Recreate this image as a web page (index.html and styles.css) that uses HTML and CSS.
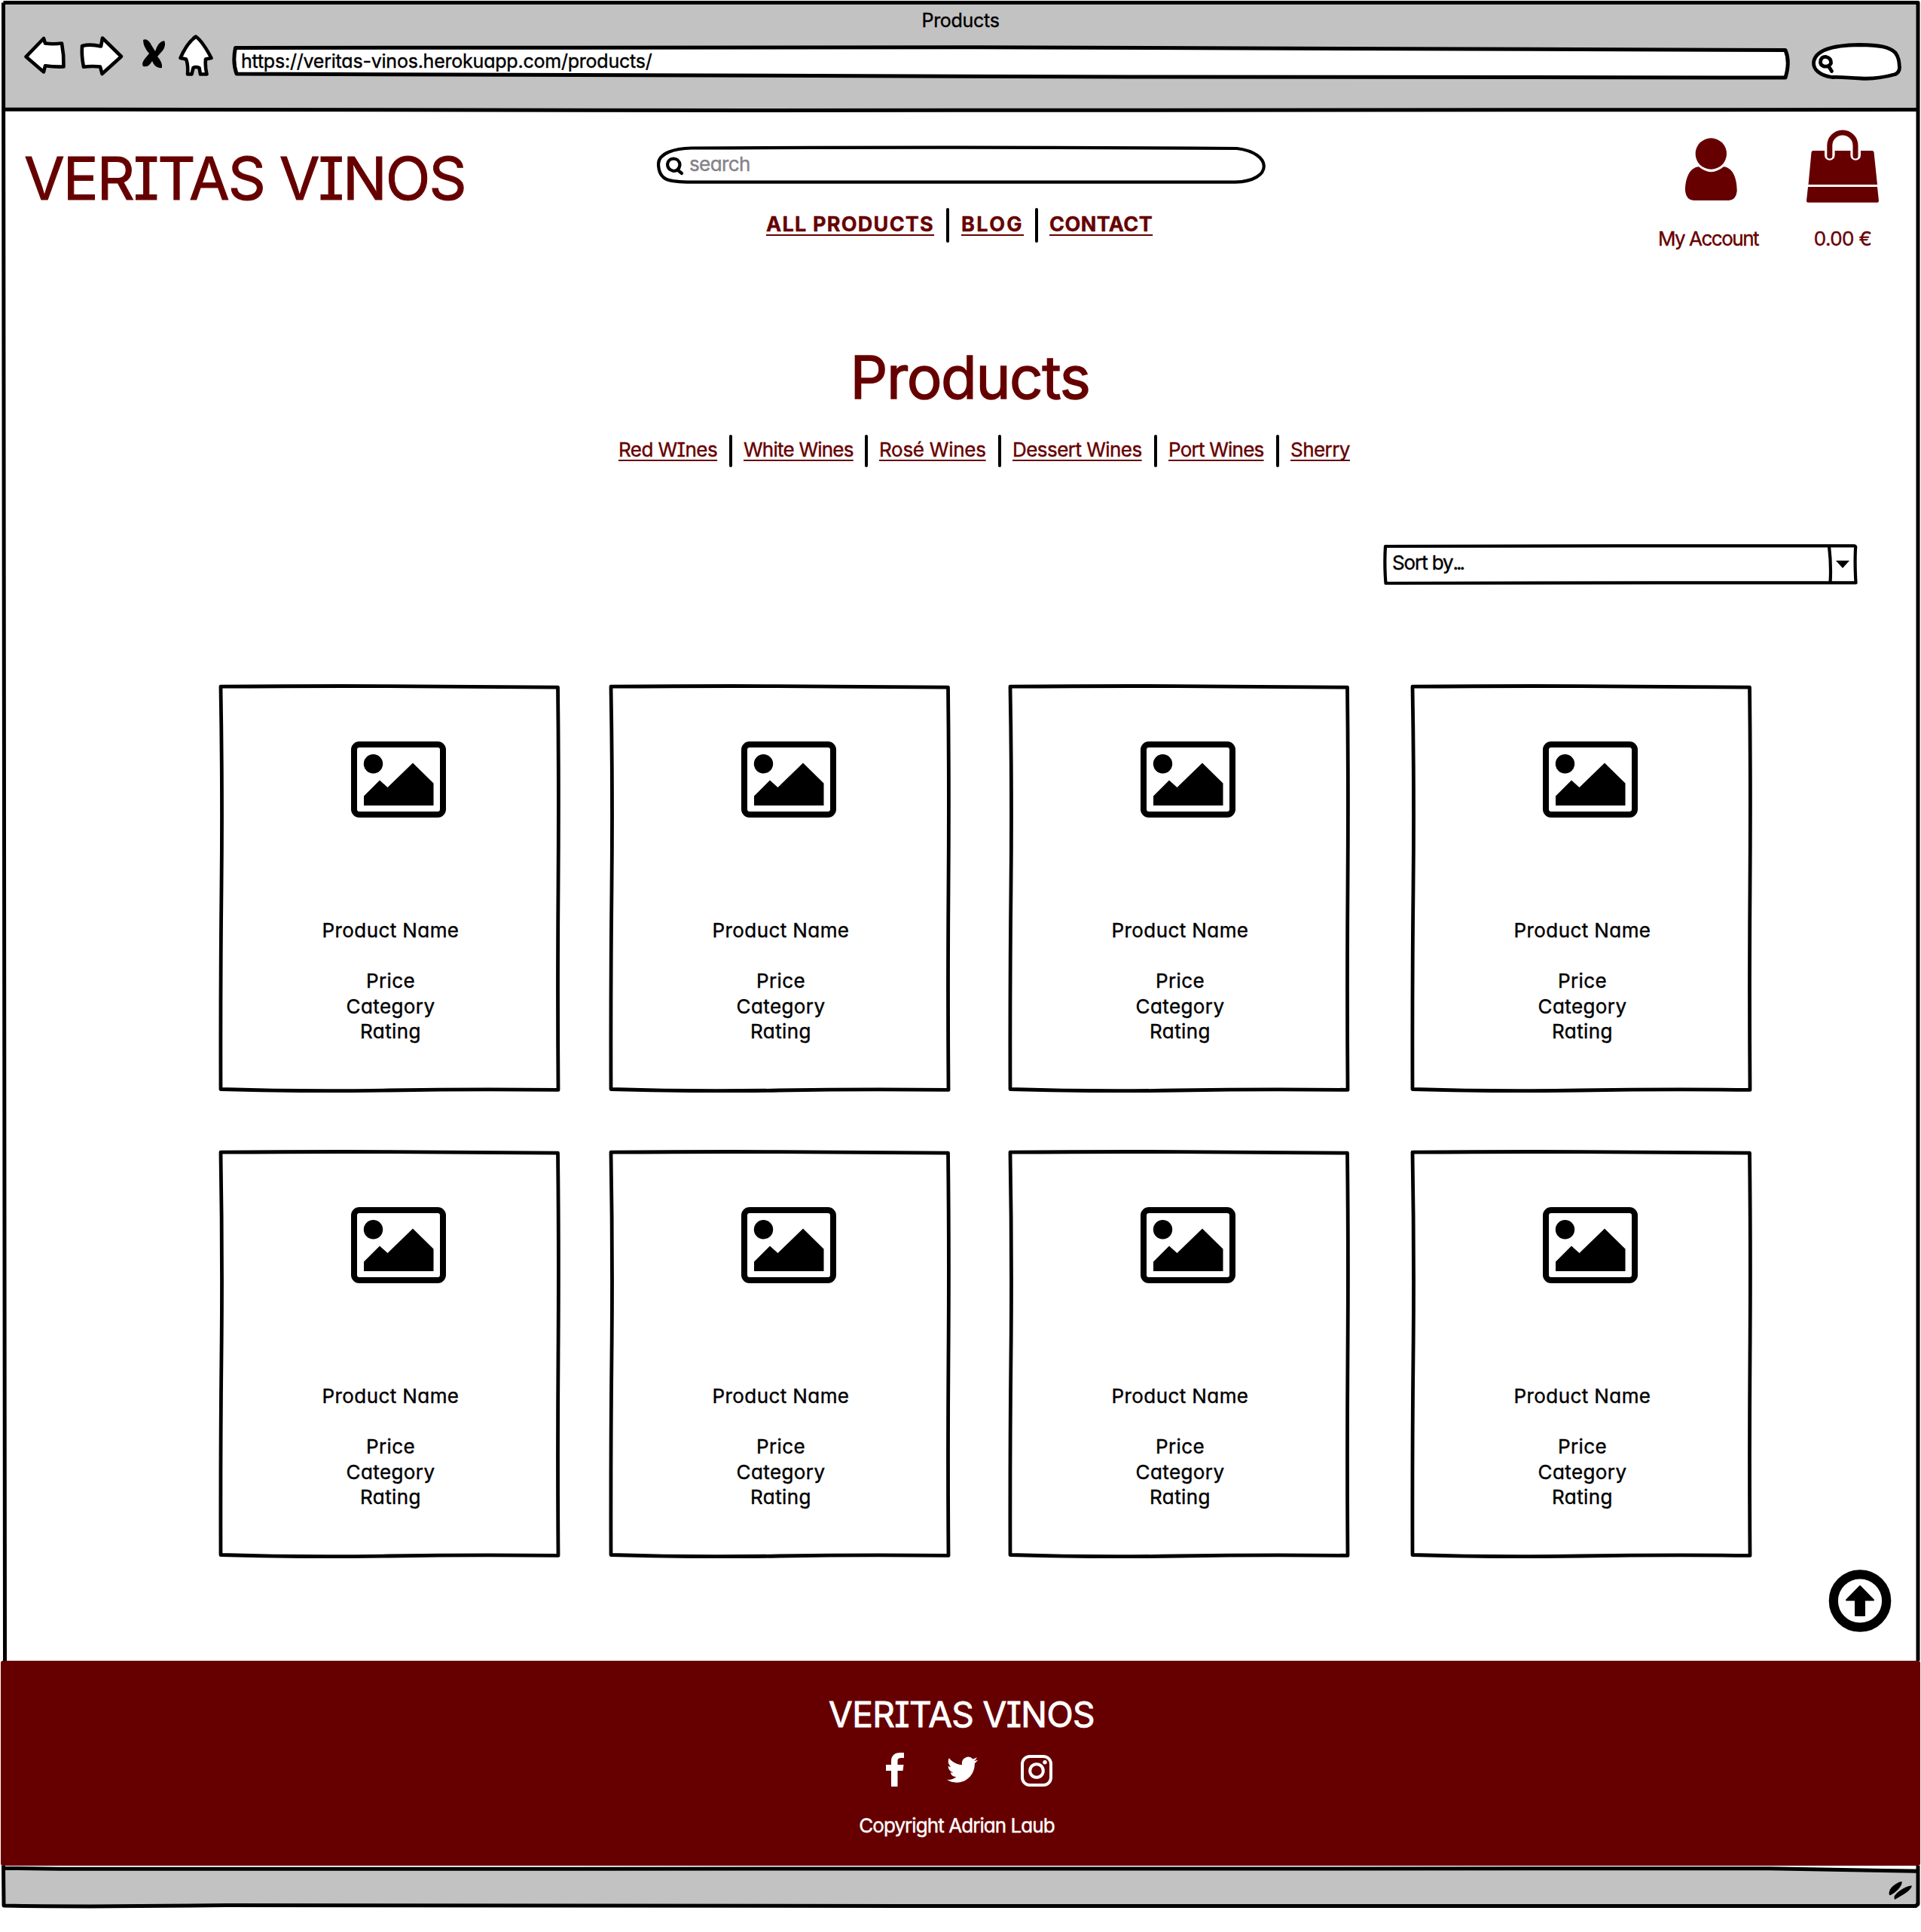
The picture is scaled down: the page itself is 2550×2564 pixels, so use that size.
FILE: index.html
```html
<!DOCTYPE html>
<html lang="en">
<head>
<meta charset="utf-8">
<title>Products</title>
<link rel="stylesheet" href="styles.css">
</head>
<body>
<svg class="sprite" aria-hidden="true">
  <symbol id="card-frame" viewBox="0 0 454 542" preserveAspectRatio="none">
    <path d="M3 3.200Q120 2.200 225 2.600T450.500 4.200Q452 130 451 270T451 538.400Q340 537 226 539T3 537.500Q2.600 400 4 270T3 3.200Z" fill="#fff" stroke="#000" stroke-width="4.800" stroke-linejoin="round"/>
  </symbol>
  <symbol id="picture" viewBox="0 0 126 101">
    <rect x="4" y="4" width="118" height="93" rx="7" fill="#fff" stroke="#000" stroke-width="8"/>
    <circle cx="29.500" cy="29.700" r="12.700"/>
    <path d="M17 72.500L38 51.500 48.500 61 82 28.500 109.500 55.500V85H17Z"/>
  </symbol>
</svg>

<div class="window">
  <header class="chrome">
    <div class="chrome-title">Products</div>
    <div class="toolbar">
      <svg class="nav-buttons" viewBox="28 40 262 66">
        <g fill="#fff" stroke="#000" stroke-width="4.600" stroke-linejoin="round">
          <path d="M34.500 75.300L58 51 60 57.500Q70 59 82 57.500 85 73 84.500 88.500 72 89 60 87.300L58 95.500Z"/>
          <path d="M109 61Q120 58 134 61.500L136 50.500 161 75 135.500 98 133 88.500Q121 87.500 111 88.800 108 74 109 61Z"/>
          <path d="M260 48.500Q269 55 280.500 77L273 78.500Q272 88 274.500 98.500H266L264.500 90Q260 88 256.500 90L254.500 98.500H249Q250 86 247 78.500L239.500 77Q248 57 260 48.500Z"/>
        </g>
        <path d="M190 53Q196 50 201 60L206 68Q210 55 218 54 221 60 216 67L209 75Q216 83 215 90 208 91 204 85L202 81Q197 90 190 88 187 84 193 77L198 71Q190 62 190 53Z"/>
      </svg>
      <div class="url-field">
        <svg class="outline" viewBox="308 58 2070 50"><path d="M312.500 63.500L1300 62.800Q1800 63.500 2370 66.500 2376.500 82 2370 103L1500 102Q900 99 314 98 308.500 82 312.500 63.500Z"/></svg>
        <span class="url-text">https://veritas-vinos.herokuapp.com/products/</span>
      </div>
      <svg class="mini-search" viewBox="2402 54 126 56">
        <g fill="#fff" stroke="#000" stroke-width="4.800" stroke-linecap="round" stroke-linejoin="round">
          <path d="M2407.500 83C2409 68 2428 60 2468 59.500 2495 60 2508 62 2516 70 2521 77 2521 83 2521.500 90Q2521 96 2516 98.500C2500 103 2485 105 2470 104 2450 103 2445 102 2432 102.500 2415 100 2407 92 2407.500 83Z"/>
          <path d="M2416.500 82Q2417 75 2424 75.500 2431 77 2430.500 84 2428 89 2421 88 2416 86 2416.500 82ZM2428 89L2431.500 94.500"/>
        </g>
      </svg>
    </div>
  </header>

  <div class="site-header">
    <div class="brand">VERITAS VINOS</div>
    <div class="header-center">
      <div class="search">
        <svg class="outline thin" viewBox="870 192 812 54">
          <path d="M918 196.500Q1300 194.500 1642 197C1690 203 1690 240 1640 241.700L918 241.700C890 241.500 874 241 874 217 875 203 895 197 918 196.500Z"/>
          <path d="M894 210.500Q902 211 902.500 219 901 227 894 227 886 225 886 218 887 211 894 210.500ZM900 226L905 230"/>
        </svg>
        <span class="search-text">search</span>
      </div>
      <nav class="main-nav">
        <a class="all">ALL PRODUCTS</a><i></i><a class="blog">BLOG</a><i></i><a class="contact">CONTACT</a>
      </nav>
    </div>
    <div class="shortcut account">
      <svg viewBox="2221 170 100 100"><circle cx="2271.300" cy="204" r="20.700"/><path d="M2255 221.300Q2271.300 235 2288 221.300C2299 222 2305.700 235 2305.700 253Q2305 265 2295 266H2248Q2238 265 2237 253C2237 235 2244 222 2255 221.300Z"/></svg>
      <span>My Account</span>
    </div>
    <div class="shortcut bag">
      <svg viewBox="2396 170 100 100"><path d="M2407 200H2422V206A6.800 6.800 0 0 0 2435.600 206V200H2456.400V206A6.800 6.800 0 0 0 2470 206V200H2485Q2487 200 2487.500 202L2492 245H2400.500L2404.500 202Q2405 200 2407 200ZM2400 248H2492L2494 266.500Q2494 268.700 2492 268.700H2400Q2398 268.700 2398 266.500Z"/><path class="handle" d="M2428.800 207V193A17.100 17.100 0 0 1 2463 193V207"/></svg>
      <span>0.00 €</span>
    </div>
  </div>

  <main>
    <h1>Products</h1>
    <nav class="categories">
      <a>Red WInes</a><i></i><a class="tight">White Wines</a><i></i><a class="loose">Rosé Wines</a><i></i><a>Dessert Wines</a><i></i><a class="tight">Port Wines</a><i></i><a>Sherry</a>
    </nav>
    <div class="sort">
      <svg class="outline thin" viewBox="1836 722 630 54"><path d="M1839 725L2150 724.300 2461 724.300Q2464 724.500 2463 728 2462 750 2463.500 773.300L2200 773.300 1839.500 774Q1837.500 750 1839 725ZM2428 725Q2431 750 2429.500 773"/><path class="caret" d="M2437 744H2455L2446 754Z"/></svg>
      <span class="sort-text">Sort by<span class="dots">...</span></span>
    </div>
    <div class="products">
      <article class="card"><svg class="frame"><use href="#card-frame"/></svg><svg class="picture"><use href="#picture"/></svg><p class="name">Product Name</p><p>Price</p><p>Category</p><p>Rating</p></article>
      <article class="card"><svg class="frame"><use href="#card-frame"/></svg><svg class="picture"><use href="#picture"/></svg><p class="name">Product Name</p><p>Price</p><p>Category</p><p>Rating</p></article>
      <article class="card"><svg class="frame"><use href="#card-frame"/></svg><svg class="picture"><use href="#picture"/></svg><p class="name">Product Name</p><p>Price</p><p>Category</p><p>Rating</p></article>
      <article class="card"><svg class="frame"><use href="#card-frame"/></svg><svg class="picture"><use href="#picture"/></svg><p class="name">Product Name</p><p>Price</p><p>Category</p><p>Rating</p></article>
      <article class="card"><svg class="frame"><use href="#card-frame"/></svg><svg class="picture"><use href="#picture"/></svg><p class="name">Product Name</p><p>Price</p><p>Category</p><p>Rating</p></article>
      <article class="card"><svg class="frame"><use href="#card-frame"/></svg><svg class="picture"><use href="#picture"/></svg><p class="name">Product Name</p><p>Price</p><p>Category</p><p>Rating</p></article>
      <article class="card"><svg class="frame"><use href="#card-frame"/></svg><svg class="picture"><use href="#picture"/></svg><p class="name">Product Name</p><p>Price</p><p>Category</p><p>Rating</p></article>
      <article class="card"><svg class="frame"><use href="#card-frame"/></svg><svg class="picture"><use href="#picture"/></svg><p class="name">Product Name</p><p>Price</p><p>Category</p><p>Rating</p></article>
    </div>
    <svg class="to-top" viewBox="2427 2083 84 83"><circle cx="2469" cy="2124.500" r="35.200" fill="none" stroke="#000" stroke-width="12.200"/><path d="M2469 2105L2487 2123.500H2475V2144H2463V2123.500H2451Z" stroke="#000" stroke-width="2" stroke-linejoin="round"/></svg>
  </main>

  <footer class="site-footer">
    <div class="footer-brand">VERITAS VINOS</div>
    <div class="social">
      <svg class="facebook" viewBox="1176 2326 24 45"><path d="M1183 2371V2350H1176V2342H1183V2337C1183 2329 1189 2326 1195 2326H1200V2333H1196C1193 2333 1191.500 2334 1191.500 2337V2342H1199.500L1198.500 2350H1191.500V2371Z"/></svg>
      <svg class="twitter" viewBox="0 3 24 19.500" preserveAspectRatio="none"><path d="M23.953 4.570a10 10 0 0 1-2.825.775 4.958 4.958 0 0 0 2.163-2.723c-.951.555-2.005.959-3.127 1.184a4.920 4.920 0 0 0-8.384 4.482C7.690 8.095 4.067 6.130 1.640 3.162a4.822 4.822 0 0 0-.666 2.475c0 1.710.870 3.213 2.188 4.096a4.904 4.904 0 0 1-2.228-.616v.060a4.923 4.923 0 0 0 3.946 4.827 4.996 4.996 0 0 1-2.212.085 4.936 4.936 0 0 0 4.604 3.417 9.867 9.867 0 0 1-6.102 2.105c-.390 0-.779-.023-1.170-.067a13.995 13.995 0 0 0 7.557 2.209c9.053 0 13.998-7.496 13.998-13.985 0-.210 0-.420-.015-.630A9.935 9.935 0 0 0 24 4.590z"/></svg>
      <svg class="instagram" viewBox="0 0 42 42"><rect x="2" y="2" width="38" height="38" rx="10" fill="none" stroke="#fff" stroke-width="4"/><circle cx="21" cy="21" r="8.800" fill="none" stroke="#fff" stroke-width="4"/><circle cx="32" cy="9.800" r="2.700"/></svg>
    </div>
    <div class="copyright">Copyright Adrian Laub</div>
  </footer>
  <div class="status-bar"></div>
  <svg class="window-frame" viewBox="0 0 2550 2540">
    <path d="M4.500 3.500H2546V2204M4.500 3.500Q3 1200 6.500 2204M4 145Q500 147 1000 146.500T2546 145.500"/>
    <path d="M4.500 2476L5 2529Q120 2531 300 2528.500L1200 2529.500 2543 2529.500L2546 2527V2476M5 2479.300L80 2480.300 1400 2480 2350 2479.800 2546 2483.300"/>
    <path class="grip" d="M2508 2515Q2506 2508 2514 2502T2525 2497.500Q2524 2504 2517 2510T2508 2515ZM2515 2521Q2512 2516 2522 2509T2538 2502.500Q2537 2508 2527 2514T2515 2521Z"/>
  </svg>
</div>
</body>
</html>
```

FILE: styles.css
```css
* { box-sizing: border-box; }

body {
  margin: 0;
  background: #fff;
  color: #000;
  font-family: Inter, "Liberation Sans", sans-serif;
  font-feature-settings: "cv11", "cv08";
  font-size: 26px;
  -webkit-text-stroke: 0.4px currentColor;
}

svg { display: block; overflow: visible; }
p, h1 { margin: 0; }
span, a { white-space: nowrap; }

.sprite { position: absolute; width: 0; height: 0; }

.window {
  position: relative;
  display: flex;
  flex-direction: column;
  width: 2550px;
  height: 2540px;
}

.window-frame {
  position: absolute;
  inset: 0;
  width: 2550px;
  height: 2540px;
  fill: none;
  stroke: #000;
  stroke-width: 5;
  stroke-linejoin: round;
  pointer-events: none;
}
.window-frame .grip { fill: #000; stroke-width: 0; }

.outline {
  position: absolute;
  inset: 0;
  fill: #fff;
  stroke: #000;
  stroke-width: 5;
  stroke-linejoin: round;
  stroke-linecap: round;
}
.outline.thin { stroke-width: 4.2; }
.outline .caret { fill: #000; stroke: none; }

/* Browser chrome */
.chrome {
  height: 143px;
  margin: 3px 4px 0;
  background: #c2c2c2;
}
.chrome-title { height: 47px; line-height: 49px; text-align: center; font-size: 25px; letter-spacing: -0.3px; }
.toolbar { display: flex; align-items: flex-start; padding-left: 24px; }
.nav-buttons { width: 262px; height: 66px; margin-top: -10px; }
.url-field {
  position: relative;
  width: 2070px;
  height: 50px;
  margin: 8px 0 0 18px;
  padding-left: 12px;
  font-size: 25px;
  line-height: 47px;
  letter-spacing: -0.22px;
}
.url-text, .search-text, .sort-text { position: relative; }
.mini-search { width: 126px; height: 56px; margin: 4px 0 0 24px; }

/* Site header */
.site-header {
  display: flex;
  align-items: flex-start;
  height: 254px;
  padding-left: 32px;
  color: #660000;
}
.brand {
  width: 838px;
  margin-top: 51px;
  font-size: 78px;
  font-weight: 400;
  line-height: 80px;
  letter-spacing: -2px;
  -webkit-text-stroke-width: 1px;
}
.header-center { width: 812px; margin: 46px 509px 0 0; }
.search { position: relative; height: 54px; padding-left: 45px; line-height: 52px; letter-spacing: -0.6px; color: #85828a; }
.main-nav {
  display: grid;
  grid-template-columns: 223px 36px 83px 34px 138px;
  height: 46px;
  margin: 30px 0 0 147px;
  font-size: 27px;
  font-weight: 700;
  line-height: 44px;
}
.main-nav a, .categories a { text-decoration: underline 2px; text-underline-offset: 4px; text-decoration-skip-ink: none; }
.main-nav i, .categories i { width: 4px; justify-self: center; background: #000; border-radius: 2px; }
.main-nav .all { letter-spacing: 1.25px; }
.main-nav .blog { letter-spacing: 2.4px; }
.main-nav .contact { letter-spacing: 0.45px; }
.shortcut { width: 160px; margin: 24px 15px 0 0; text-align: center; line-height: 40px; }
.shortcut svg { width: 100px; height: 100px; margin: 0 auto 27px; fill: #660000; }
.shortcut .handle { fill: none; stroke: #660000; stroke-width: 7; stroke-linecap: round; }
.account span { margin-right: 7px; letter-spacing: -1.5px; }
.bag span { letter-spacing: -0.6px; }

/* Catalogue */
main { display: flex; flex-direction: column; }
h1 {
  margin: 50px 0 0 25px;
  font-size: 78px;
  font-weight: 400;
  line-height: 102px;
  height: 100px;
  letter-spacing: -1.4px;
  text-align: center;
  color: #660000;
  -webkit-text-stroke-width: 1.4px;
}
.categories {
  display: grid;
  grid-template-columns: 132px 34px 146px 34px 142px 35px 172px 35px 127px 35px 79px;
  height: 43px;
  margin: 27px 0 0 821px;
  line-height: 40px;
  letter-spacing: -0.55px;
  color: #660000;
}
.categories .tight { letter-spacing: -0.77px; }
.categories .loose { letter-spacing: -0.27px; }
.sort {
  position: relative;
  align-self: flex-end;
  width: 630px;
  height: 54px;
  margin: 102px 84px 0 0;
  padding-left: 12px;
  line-height: 50px;
  letter-spacing: -1.1px;
}
.sort .dots { letter-spacing: -3px; }
.products {
  display: grid;
  grid-template-columns: 518px 530px 534px 454px;
  grid-auto-rows: 542px;
  row-gap: 76px;
  margin: 132px 0 0 290px;
}
.card {
  position: relative;
  width: 454px;
  padding: 76px 0 0 3px;
  text-align: center;
  line-height: 33.5px;
  letter-spacing: 0.4px;
}
.card .frame { position: absolute; inset: 0; width: 454px; height: 542px; }
.card .picture { position: relative; width: 126px; height: 101px; margin: 0 0 133px 173px; }
.card p { position: relative; }
.card .name { margin-bottom: 33.5px; }
.to-top { align-self: flex-end; width: 84px; height: 83px; margin: 15px 39px 38px 0; }

/* Footer */
.site-footer {
  position: relative;
  z-index: 1;
  display: flex;
  flex-direction: column;
  align-items: center;
  height: 272px;
  margin: 0 1px;
  padding-top: 41px;
  border-radius: 3px;
  background: #660000;
  color: #fff;
}
.footer-brand {
  padding-left: 3px;
  font-size: 46px;
  font-weight: 400;
  line-height: 60px;
  letter-spacing: -0.6px;
  -webkit-text-stroke-width: 0.9px;
}
.social { display: flex; height: 46px; margin: 21px 0 31px 22px; fill: #fff; }
.facebook { width: 24px; height: 45px; }
.twitter { width: 41px; height: 34px; margin: 7px 57px 0; }
.instagram { width: 42px; height: 42px; margin-top: 3px; }
.copyright { padding-right: 10px; line-height: 40px; letter-spacing: -0.93px; }
.status-bar { height: 50px; margin: 4px 4px 0; background: #c2c2c2; }
```
